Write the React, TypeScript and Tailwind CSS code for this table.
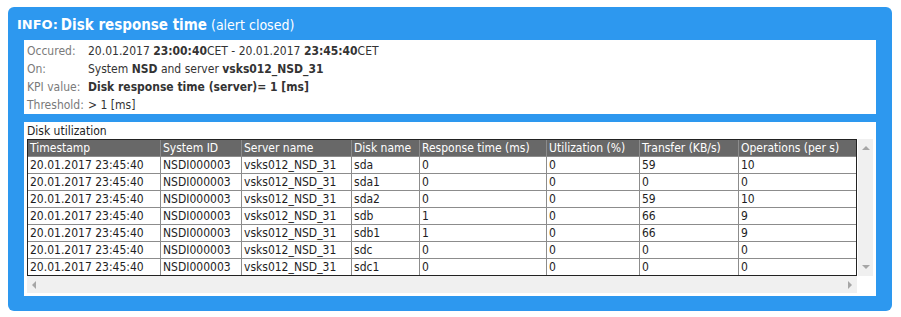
import React from 'react';

const columns = [
  { title: 'Timestamp', width: 'w-[132px]' },
  { title: 'System ID', width: 'w-[81px]' },
  { title: 'Server name', width: 'w-[110px]' },
  { title: 'Disk name', width: 'w-[68px]' },
  { title: 'Response time (ms)', width: 'w-[127px]' },
  { title: 'Utilization (%)', width: 'w-[93px]' },
  { title: 'Transfer (KB/s)', width: 'w-[99px]' },
  { title: 'Operations (per s)', width: 'w-[118px]' },
];

const rows: string[][] = [
  ['20.01.2017 23:45:40', 'NSDI000003', 'vsks012_NSD_31', 'sda', '0', '0', '59', '10'],
  ['20.01.2017 23:45:40', 'NSDI000003', 'vsks012_NSD_31', 'sda1', '0', '0', '0', '0'],
  ['20.01.2017 23:45:40', 'NSDI000003', 'vsks012_NSD_31', 'sda2', '0', '0', '59', '10'],
  ['20.01.2017 23:45:40', 'NSDI000003', 'vsks012_NSD_31', 'sdb', '1', '0', '66', '9'],
  ['20.01.2017 23:45:40', 'NSDI000003', 'vsks012_NSD_31', 'sdb1', '1', '0', '66', '9'],
  ['20.01.2017 23:45:40', 'NSDI000003', 'vsks012_NSD_31', 'sdc', '0', '0', '0', '0'],
  ['20.01.2017 23:45:40', 'NSDI000003', 'vsks012_NSD_31', 'sdc1', '0', '0', '0', '0'],
];

const Arrow: React.FC<{ dir: 'up' | 'down' | 'left' | 'right' }> = ({ dir }) => {
  const points = {
    up: '0,4 4,0 8,4',
    down: '0,0 8,0 4,4',
    left: '4,0 4,8 0,4',
    right: '0,0 0,8 4,4',
  }[dir];
  const vertical = dir === 'up' || dir === 'down';
  return (
    <svg width={vertical ? 8 : 4} height={vertical ? 4 : 8} viewBox={vertical ? '0 0 8 4' : '0 0 4 8'}>
      <polygon points={points} fill="#a6a6a6" />
    </svg>
  );
};

const InfoRow: React.FC<{ label: string; children: React.ReactNode }> = ({ label, children }) => (
  <div className="flex">
    <span className="w-[61px] shrink-0 text-[#7a7a7a]">{label}</span>
    <span className="text-[#333]">{children}</span>
  </div>
);

export default function App() {
  return (
    <div className="pt-[7px] pl-2 font-['DejaVu_Sans_Condensed','DejaVu_Sans',sans-serif] text-[12px]">
      <div className="w-[884px] rounded-[6px] bg-[#2d98ef] pb-[15px]">
        {/* title bar */}
        <div className="h-[33px] flex items-center pl-[9px] pt-[3px] text-white">
          <span className="font-['DejaVu_Sans',sans-serif] font-bold text-[13px] mr-[3px]">INFO:</span>
          <span className="font-bold text-[15px] mr-[4px]">Disk response time</span>
          <span className="text-[14px]">(alert closed)</span>
        </div>

        <div className="px-4 flex flex-col gap-2">
          {/* alert details */}
          <div className="bg-white h-[74px] pt-[2px] px-[3px] leading-[18px]">
            <InfoRow label="Occured:">
              20.01.2017 <b>23:00:40</b>CET - 20.01.2017 <b>23:45:40</b>CET
            </InfoRow>
            <InfoRow label="On:">
              System <b>NSD</b> and server <b>vsks012_NSD_31</b>
            </InfoRow>
            <InfoRow label="KPI value:">
              <b>Disk response time (server)= 1 [ms]</b>
            </InfoRow>
            <InfoRow label="Threshold:">&gt; 1 [ms]</InfoRow>
          </div>

          {/* disk utilization grid */}
          <div className="bg-white px-[3px] pb-[3px]">
            <div className="h-[17px] flex items-end leading-[16px] text-[#222]">Disk utilization</div>
            <div className="flex">
              <div className="w-[830px] border border-[#222]">
                <table className="border-separate border-spacing-0 table-fixed w-[828px] leading-[16px]">
                  <colgroup>
                    {columns.map((c) => (
                      <col key={c.title} className={c.width} />
                    ))}
                  </colgroup>
                  <thead>
                    <tr className="bg-[#686868] text-white">
                      {columns.map((c, i) => (
                        <th
                          key={c.title}
                          className={`p-0 pl-[2px] text-left font-normal whitespace-nowrap overflow-hidden ${i > 0 ? 'border-l border-[#8c8c8c]' : ''}`}
                        >
                          {c.title}
                        </th>
                      ))}
                    </tr>
                  </thead>
                  <tbody className="text-[#1e1e1e]">
                    {rows.map((r, ri) => (
                      <tr key={ri}>
                        {r.map((v, ci) => (
                          <td
                            key={ci}
                            className={`p-0 pl-[2px] border-t border-[#8c8c8c] whitespace-nowrap overflow-hidden ${ci > 0 ? 'border-l' : ''}`}
                          >
                            {v}
                          </td>
                        ))}
                      </tr>
                    ))}
                  </tbody>
                </table>
              </div>
              {/* vertical scrollbar */}
              <div className="w-[17px] ml-[1px] bg-[#f0f0f0] flex flex-col items-center justify-between py-[7px]">
                <Arrow dir="up" />
                <Arrow dir="down" />
              </div>
            </div>
            {/* horizontal scrollbar */}
            <div className="flex">
              <div className="w-[830px] h-[17px] bg-[#f0f0f0] flex items-center justify-between px-[5px]">
                <Arrow dir="left" />
                <Arrow dir="right" />
              </div>
            </div>
          </div>
        </div>
      </div>
    </div>
  );
}
